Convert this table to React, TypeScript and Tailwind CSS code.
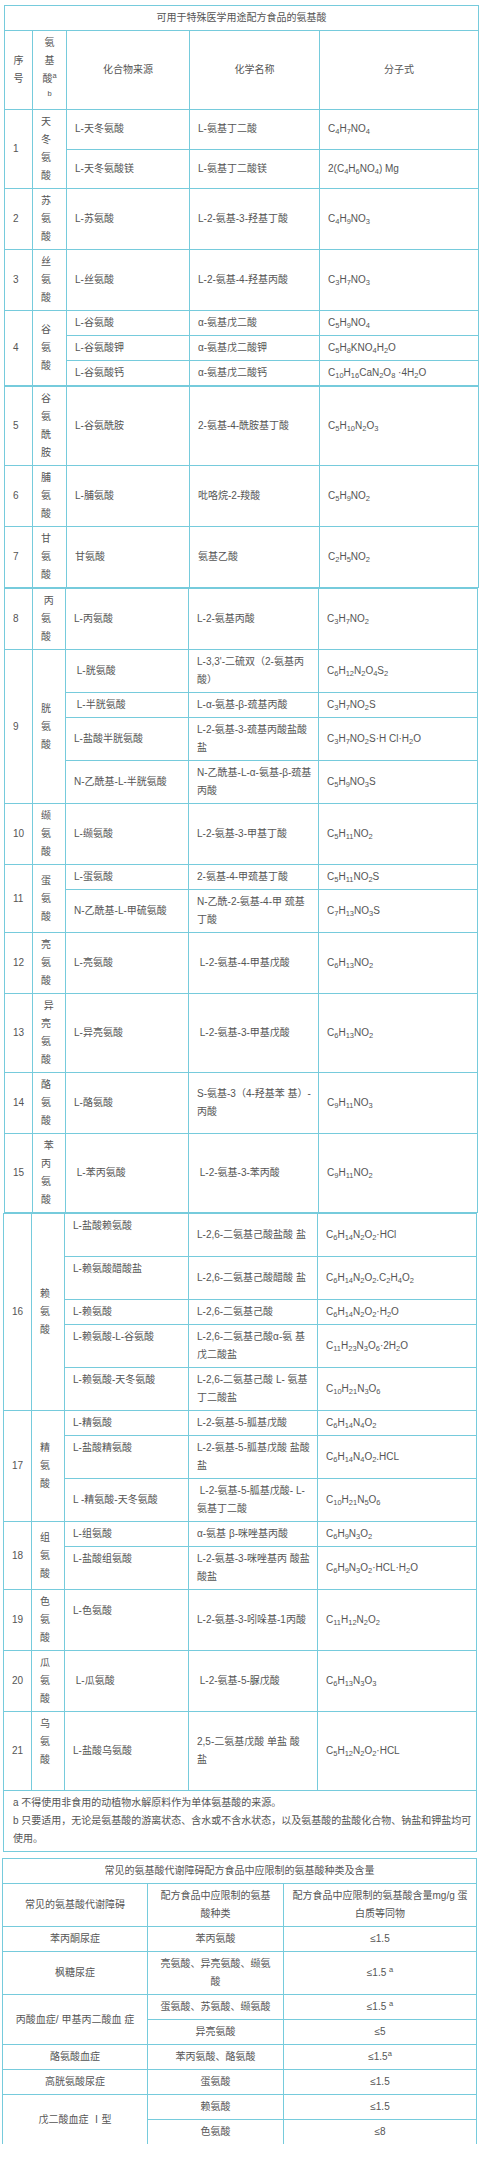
import { Fragment } from "react";

type Sub = { src: string[]; chem: string[]; f: string };
type Row = { no: number; name: string; indent?: boolean; extra?: boolean; subs: Sub[] };

const cell = "border border-[#76cbdc] px-2 py-[3px] align-middle whitespace-nowrap text-left";
const cellC = "border border-[#76cbdc] px-2 py-[3px] align-middle whitespace-nowrap text-center";
const NB = "\u00a0";

function Lines({ lines }: { lines: string[] }) {
  return (
    <>
      {lines.map((l, i) => (
        <Fragment key={i}>
          {i > 0 && <br />}
          {l}
        </Fragment>
      ))}
    </>
  );
}

// digits right after a letter or ")" become subscripts
function Formula({ text }: { text: string }) {
  const parts = text.split(/(?<=[A-Za-z)])(\d+)/);
  return (
    <>
      {parts.map((p, i) => (i % 2 === 1 ? <sub key={i}>{p}</sub> : <Fragment key={i}>{p}</Fragment>))}
    </>
  );
}

const part1: Row[] = [
  {
    no: 1,
    name: "天冬氨酸",
    subs: [
      { src: ["L-天冬氨酸"], chem: ["L-氨基丁二酸"], f: "C4H7NO4" },
      { src: ["L-天冬氨酸镁"], chem: ["L-氨基丁二酸镁"], f: "2(C4H6NO4) Mg" },
    ],
  },
  { no: 2, name: "苏氨酸", subs: [{ src: ["L-苏氨酸"], chem: ["L-2-氨基-3-羟基丁酸"], f: "C4H9NO3" }] },
  { no: 3, name: "丝氨酸", subs: [{ src: ["L-丝氨酸"], chem: ["L-2-氨基-4-羟基丙酸"], f: "C3H7NO3" }] },
  {
    no: 4,
    name: "谷氨酸",
    subs: [
      { src: ["L-谷氨酸"], chem: ["α-氨基戊二酸"], f: "C5H9NO4" },
      { src: ["L-谷氨酸钾"], chem: ["α-氨基戊二酸钾"], f: "C5H8KNO4H2O" },
      { src: ["L-谷氨酸钙"], chem: ["α-氨基戊二酸钙"], f: "C10H16CaN2O8 ·4H2O" },
    ],
  },
];

const part2: Row[] = [
  { no: 5, name: "谷氨酰胺", subs: [{ src: ["L-谷氨酰胺"], chem: ["2-氨基-4-酰胺基丁酸"], f: "C5H10N2O3" }] },
  { no: 6, name: "脯氨酸", subs: [{ src: ["L-脯氨酸"], chem: ["吡咯烷-2-羧酸"], f: "C5H9NO2" }] },
  { no: 7, name: "甘氨酸", subs: [{ src: ["甘氨酸"], chem: ["氨基乙酸"], f: "C2H5NO2" }] },
];

const part3: Row[] = [
  { no: 8, name: "丙氨酸", indent: true, subs: [{ src: ["L-丙氨酸"], chem: ["L-2-氨基丙酸"], f: "C3H7NO2" }] },
  {
    no: 9,
    name: "胱氨酸",
    subs: [
      { src: [NB + "L-胱氨酸"], chem: ["L-3,3'-二硫双（2-氨基丙", "酸）"], f: "C6H12N2O4S2" },
      { src: [NB + "L-半胱氨酸"], chem: ["L-α-氨基-β-巯基丙酸"], f: "C3H7NO2S" },
      { src: ["L-盐酸半胱氨酸"], chem: ["L-2-氨基-3-巯基丙酸盐酸", "盐"], f: "C3H7NO2S·H Cl·H2O" },
      { src: ["N-乙酰基-L-半胱氨酸"], chem: ["N-乙酰基-L-α-氨基-β-巯基", "丙酸"], f: "C5H9NO3S" },
    ],
  },
  { no: 10, name: "缬氨酸", subs: [{ src: ["L-缬氨酸"], chem: ["L-2-氨基-3-甲基丁酸"], f: "C5H11NO2" }] },
  {
    no: 11,
    name: "蛋氨酸",
    subs: [
      { src: ["L-蛋氨酸"], chem: ["2-氨基-4-甲巯基丁酸"], f: "C5H11NO2S" },
      { src: ["N-乙酰基-L-甲硫氨酸"], chem: ["N-乙酰-2-氨基-4-甲 巯基", "丁酸"], f: "C7H13NO3S" },
    ],
  },
  { no: 12, name: "亮氨酸", subs: [{ src: ["L-亮氨酸"], chem: [NB + "L-2-氨基-4-甲基戊酸"], f: "C6H13NO2" }] },
  {
    no: 13,
    name: "异亮氨酸",
    indent: true,
    subs: [{ src: ["L-异亮氨酸"], chem: [NB + "L-2-氨基-3-甲基戊酸"], f: "C6H13NO2" }],
  },
  { no: 14, name: "酪氨酸", subs: [{ src: ["L-酪氨酸"], chem: ["S-氨基-3（4-羟基苯 基）-", "丙酸"], f: "C9H11NO3" }] },
  {
    no: 15,
    name: "苯丙氨酸",
    indent: true,
    subs: [{ src: [NB + "L-苯丙氨酸"], chem: [NB + "L-2-氨基-3-苯丙酸"], f: "C9H11NO2" }],
  },
];

const part4: Row[] = [
  {
    no: 16,
    name: "赖氨酸",
    subs: [
      { src: ["L-盐酸赖氨酸", NB], chem: ["L-2,6-二氨基己酸盐酸 盐"], f: "C6H14N2O2·HCl" },
      { src: ["L-赖氨酸醋酸盐", NB], chem: ["L-2,6-二氨基己酸醋酸 盐"], f: "C6H14N2O2.C2H4O2" },
      { src: ["L-赖氨酸"], chem: ["L-2,6-二氨基己酸"], f: "C6H14N2O2·H2O" },
      { src: ["L-赖氨酸-L-谷氨酸", NB], chem: ["L-2,6-二氨基己酸α-氨 基", "戊二酸盐"], f: "C11H23N3O6·2H2O" },
      { src: ["L-赖氨酸-天冬氨酸", NB], chem: ["L-2,6-二氨基己酸 L- 氨基", "丁二酸盐"], f: "C10H21N3O6" },
    ],
  },
  {
    no: 17,
    name: "精氨酸",
    subs: [
      { src: ["L-精氨酸"], chem: ["L-2-氨基-5-胍基戊酸"], f: "C6H14N4O2" },
      { src: ["L-盐酸精氨酸", NB], chem: ["L-2-氨基-5-胍基戊酸 盐酸", "盐"], f: "C6H14N4O2.HCL" },
      { src: ["L -精氨酸-天冬氨酸"], chem: [NB + "L-2-氨基-5-胍基戊酸- L-", "氨基丁二酸"], f: "C10H21N5O6" },
    ],
  },
  {
    no: 18,
    name: "组氨酸",
    subs: [
      { src: ["L-组氨酸"], chem: ["α-氨基 β-咪唑基丙酸"], f: "C6H9N3O2" },
      { src: ["L-盐酸组氨酸", NB], chem: ["L-2-氨基-3-咪唑基丙 酸盐", "酸盐"], f: "C6H9N3O2·HCL·H2O" },
    ],
  },
  { no: 19, name: "色氨酸", subs: [{ src: ["L-色氨酸", NB], chem: ["L-2-氨基-3-吲哚基-1丙酸"], f: "C11H12N2O2" }] },
  { no: 20, name: "瓜氨酸", subs: [{ src: [NB + "L-瓜氨酸"], chem: [NB + "L-2-氨基-5-脲戊酸"], f: "C6H13N3O3" }] },
  {
    no: 21,
    name: "乌氨酸",
    extra: true,
    subs: [{ src: ["L-盐酸乌氨酸"], chem: ["2,5-二氨基戊酸 单盐 酸", "盐"], f: "C5H12N2O2·HCL" }],
  },
];

function AminoRows({ r }: { r: Row }) {
  const chars = r.name.split("");
  if (r.indent) chars[0] = NB + chars[0];
  if (r.extra) chars.push(NB);
  return (
    <>
      {r.subs.map((s, i) => (
        <tr key={i}>
          {i === 0 && (
            <td rowSpan={r.subs.length} className={cell}>
              {r.no}
            </td>
          )}
          {i === 0 && (
            <td rowSpan={r.subs.length} className={cell}>
              <Lines lines={chars} />
            </td>
          )}
          <td className={cell}>
            <Lines lines={s.src} />
          </td>
          <td className={cell}>
            <Lines lines={s.chem} />
          </td>
          <td className={cell}>
            <Formula text={s.f} />
          </td>
        </tr>
      ))}
    </>
  );
}

function Cols({ w }: { w: number[] }) {
  return (
    <colgroup>
      {w.map((x, i) => (
        <col key={i} style={{ width: x }} />
      ))}
    </colgroup>
  );
}

export default function App() {
  return (
    <div className="w-[480px] bg-white pt-[5px] pb-4 font-['Liberation_Sans','Noto_Sans_CJK_SC',sans-serif] text-[10px] leading-[18px] text-[#555]">
      {/* 第一部分 */}
      <table className="ml-[4px] w-[474px] table-fixed border-collapse">
        <Cols w={[28, 34, 123, 130, 159]} />
        <tbody>
          <tr>
            <td colSpan={5} className={cellC}>
              可用于特殊医学用途配方食品的氨基酸
            </td>
          </tr>
          <tr>
            <td className={cellC}>
              序<br />号
            </td>
            <td className={cellC}>
              氨<br />基<br />酸<sup>a</sup>
              <br />
              <sup>b</sup>
            </td>
            <td className={cellC}>化合物来源</td>
            <td className={cellC}>化学名称</td>
            <td className={cellC}>分子式</td>
          </tr>
          {part1.map((r) => (
            <AminoRows key={r.no} r={r} />
          ))}
        </tbody>
      </table>

      <table className="ml-[4px] w-[474px] table-fixed border-collapse">
        <Cols w={[28, 34, 123, 130, 159]} />
        <tbody>
          {part2.map((r) => (
            <AminoRows key={r.no} r={r} />
          ))}
        </tbody>
      </table>

      <table className="ml-[4px] w-[473px] table-fixed border-collapse">
        <Cols w={[28, 33, 123, 130, 159]} />
        <tbody>
          {part3.map((r) => (
            <AminoRows key={r.no} r={r} />
          ))}
        </tbody>
      </table>

      <table className="ml-[3px] w-[473px] table-fixed border-collapse">
        <Cols w={[28, 33, 124, 129, 159]} />
        <tbody>
          {part4.map((r) => (
            <AminoRows key={r.no} r={r} />
          ))}
          <tr>
            <td colSpan={5} className="border border-[#76cbdc] px-[9px] py-[3px] text-left">
              <div className="whitespace-nowrap">a 不得使用非食用的动植物水解原料作为单体氨基酸的来源。</div>
              <div className="whitespace-nowrap text-justify [text-align-last:justify]">
                b 只要适用，无论是氨基酸的游离状态、含水或不含水状态，以及氨基酸的盐酸化合物、钠盐和钾盐均可
              </div>
              <div className="whitespace-nowrap">使用。</div>
            </td>
          </tr>
        </tbody>
      </table>

      {/* 第二部分 */}
      <table className="ml-[2px] mt-[6px] w-[474px] table-fixed border-collapse">
        <Cols w={[145, 136, 193]} />
        <tbody>
          <tr>
            <td colSpan={3} className={cellC}>
              常见的氨基酸代谢障碍配方食品中应限制的氨基酸种类及含量
            </td>
          </tr>
          <tr>
            <td className={cellC}>常见的氨基酸代谢障碍</td>
            <td className={cellC}>
              配方食品中应限制的氨基
              <br />
              酸种类
            </td>
            <td className={cellC}>
              配方食品中应限制的氨基酸含量mg/g 蛋
              <br />
              白质等同物
            </td>
          </tr>
          <tr>
            <td className={cellC}>苯丙酮尿症</td>
            <td className={cellC}>苯丙氨酸</td>
            <td className={cellC}>≤1.5</td>
          </tr>
          <tr>
            <td className={cellC}>枫糖尿症</td>
            <td className={cellC}>
              亮氨酸、异亮氨酸、缬氨
              <br />
              酸
            </td>
            <td className={cellC}>
              ≤1.5 <sup>a</sup>
            </td>
          </tr>
          <tr>
            <td rowSpan={2} className={cellC}>
              丙酸血症/ 甲基丙二酸血 症
            </td>
            <td className={cellC}>蛋氨酸、苏氨酸、缬氨酸</td>
            <td className={cellC}>
              ≤1.5 <sup>a</sup>
            </td>
          </tr>
          <tr>
            <td className={cellC}>异亮氨酸</td>
            <td className={cellC}>≤5</td>
          </tr>
          <tr>
            <td className={cellC}>酪氨酸血症</td>
            <td className={cellC}>苯丙氨酸、酪氨酸</td>
            <td className={cellC}>
              ≤1.5<sup>a</sup>
            </td>
          </tr>
          <tr>
            <td className={cellC}>高胱氨酸尿症</td>
            <td className={cellC}>蛋氨酸</td>
            <td className={cellC}>≤1.5</td>
          </tr>
          <tr>
            <td rowSpan={2} className={`${cellC} border-b-0`}>
              戊二酸血症 Ⅰ型
            </td>
            <td className={cellC}>赖氨酸</td>
            <td className={cellC}>≤1.5</td>
          </tr>
          <tr>
            <td className={`${cellC} border-b-0`}>色氨酸</td>
            <td className={`${cellC} border-b-0`}>≤8</td>
          </tr>
        </tbody>
      </table>
    </div>
  );
}
